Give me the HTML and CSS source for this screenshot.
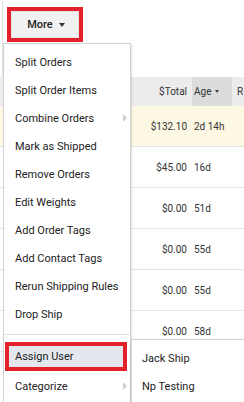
FILE: index.html
```html
<!DOCTYPE html>
<html>
<head>
<meta charset="utf-8">
<link rel="stylesheet" href="styles.css">
</head>
<body>
<div class="page">
  <div class="toolbar">
    <div class="hl hl-btn"><button class="more">More <span class="caret"></span></button></div>
  </div>
  <div class="table">
    <div class="row head">
      <div class="c total">$Total</div>
      <div class="c age sorted">Age <span class="caret-s"></span></div>
      <div class="c r">R</div>
    </div>
    <div class="row warn"><div class="c total">$132.10</div><div class="c age">2d 14h</div><div class="c r"></div></div>
    <div class="row"><div class="c total">$45.00</div><div class="c age">16d</div><div class="c r"></div></div>
    <div class="row"><div class="c total">$0.00</div><div class="c age">51d</div><div class="c r"></div></div>
    <div class="row"><div class="c total">$0.00</div><div class="c age">55d</div><div class="c r"></div></div>
    <div class="row"><div class="c total">$0.00</div><div class="c age">55d</div><div class="c r"></div></div>
    <div class="row"><div class="c total">$0.00</div><div class="c age">58d</div><div class="c r"></div></div>
  </div>
  <div class="menu">
    <div class="item">Split Orders</div>
    <div class="item">Split Order Items</div>
    <div class="item sub">Combine Orders</div>
    <div class="item">Mark as Shipped</div>
    <div class="item">Remove Orders</div>
    <div class="item">Edit Weights</div>
    <div class="item">Add Order Tags</div>
    <div class="item">Add Contact Tags</div>
    <div class="item">Rerun Shipping Rules</div>
    <div class="item">Drop Ship</div>
    <div class="sep"></div>
    <div class="hl hl-item"><div class="item active">Assign User</div></div>
    <div class="item sub">Categorize</div>
  </div>
  <div class="submenu">
    <div class="item">Jack Ship</div>
    <div class="item">Np Testing</div>
  </div>
</div>
</body>
</html>
```
FILE: styles.css
```css
html, body {
  margin: 0;
  padding: 0;
  background: #fff;
}
body {
  width: 244px;
  height: 402px;
  overflow: hidden;
  font-family: Roboto, "Liberation Sans", sans-serif;
  color: #222;
}
.page {
  position: relative;
  width: 244px;
  height: 402px;
  overflow: hidden;
}
.toolbar {
  height: 77px;
  margin-left: 2px;
  border-left: 1px solid #e2e2e2;
  padding: 7px 0 0 4px;
  box-sizing: border-box;
}
.hl {
  border: 4px solid #e3202b;
  box-sizing: border-box;
}
.hl-btn {
  width: 76px;
  height: 35px;
}
.more {
  width: 100%;
  height: 100%;
  margin: 0;
  border: 1px solid #e4e4e4;
  background: #f1f1f1;
  font-family: Roboto, "Liberation Sans", sans-serif;
  font-size: 11px;
  font-weight: 500;
  color: #222;
  display: flex;
  align-items: center;
  justify-content: center;
  gap: 6px;
  padding: 0 0 0 2px;
}
.caret {
  width: 0;
  height: 0;
  border-left: 3px solid transparent;
  border-right: 3px solid transparent;
  border-top: 4px solid #333;
}
.table {
  font-size: 10px;
  color: #333;
}
.row {
  display: grid;
  grid-template-columns: 1fr 40px 12px;
  height: 41px;
  border-bottom: 1px solid #e4e4e4;
  box-sizing: border-box;
  align-items: center;
}
.row.head {
  height: 29px;
  background: #ececec;
  border-bottom: none;
  align-items: stretch;
}
.row.warn {
  background: #fcf8e3;
}
.c {
  display: flex;
  align-items: center;
  white-space: nowrap;
}
.total {
  justify-content: flex-end;
  padding-right: 5px;
}
.age {
  padding-left: 2px;
  gap: 4px;
}
.sorted {
  background: #dcdcdc;
}
.caret-s {
  width: 0;
  height: 0;
  border-left: 2.5px solid transparent;
  border-right: 2.5px solid transparent;
  border-top: 3px solid #444;
}
.r {
  padding-left: 5px;
}
.menu {
  position: absolute;
  left: 3px;
  top: 43px;
  width: 128px;
  height: 380px;
  box-sizing: border-box;
  background: #fff;
  border: 1px solid #d2d2d2;
  box-shadow: 1px 1px 2px rgba(0, 0, 0, 0.12);
  padding-top: 4px;
  font-size: 11px;
}
.item {
  position: relative;
  height: 28px;
  display: flex;
  align-items: center;
  padding-left: 11px;
  white-space: nowrap;
}
.item.sub::after {
  content: "";
  position: absolute;
  right: 3px;
  top: 10px;
  width: 0;
  height: 0;
  border-top: 4px solid transparent;
  border-bottom: 4px solid transparent;
  border-left: 4px solid #cfcfcf;
}
.sep {
  height: 1px;
  background: #e2e2e2;
  margin: 6px 0 7px;
}
.hl-item {
  margin: 0 3px 1px 1px;
  height: 29px;
}
.item.active {
  height: 21px;
  background: #e4e7ee;
  padding-left: 6px;
}
.submenu {
  position: absolute;
  left: 131px;
  top: 339px;
  width: 130px;
  height: 80px;
  box-sizing: border-box;
  background: #fff;
  border: 1px solid #d2d2d2;
  box-shadow: 0 1px 3px rgba(0, 0, 0, 0.12);
  padding-top: 4px;
  font-size: 11px;
}
.submenu .item {
  padding-left: 10px;
}
```
